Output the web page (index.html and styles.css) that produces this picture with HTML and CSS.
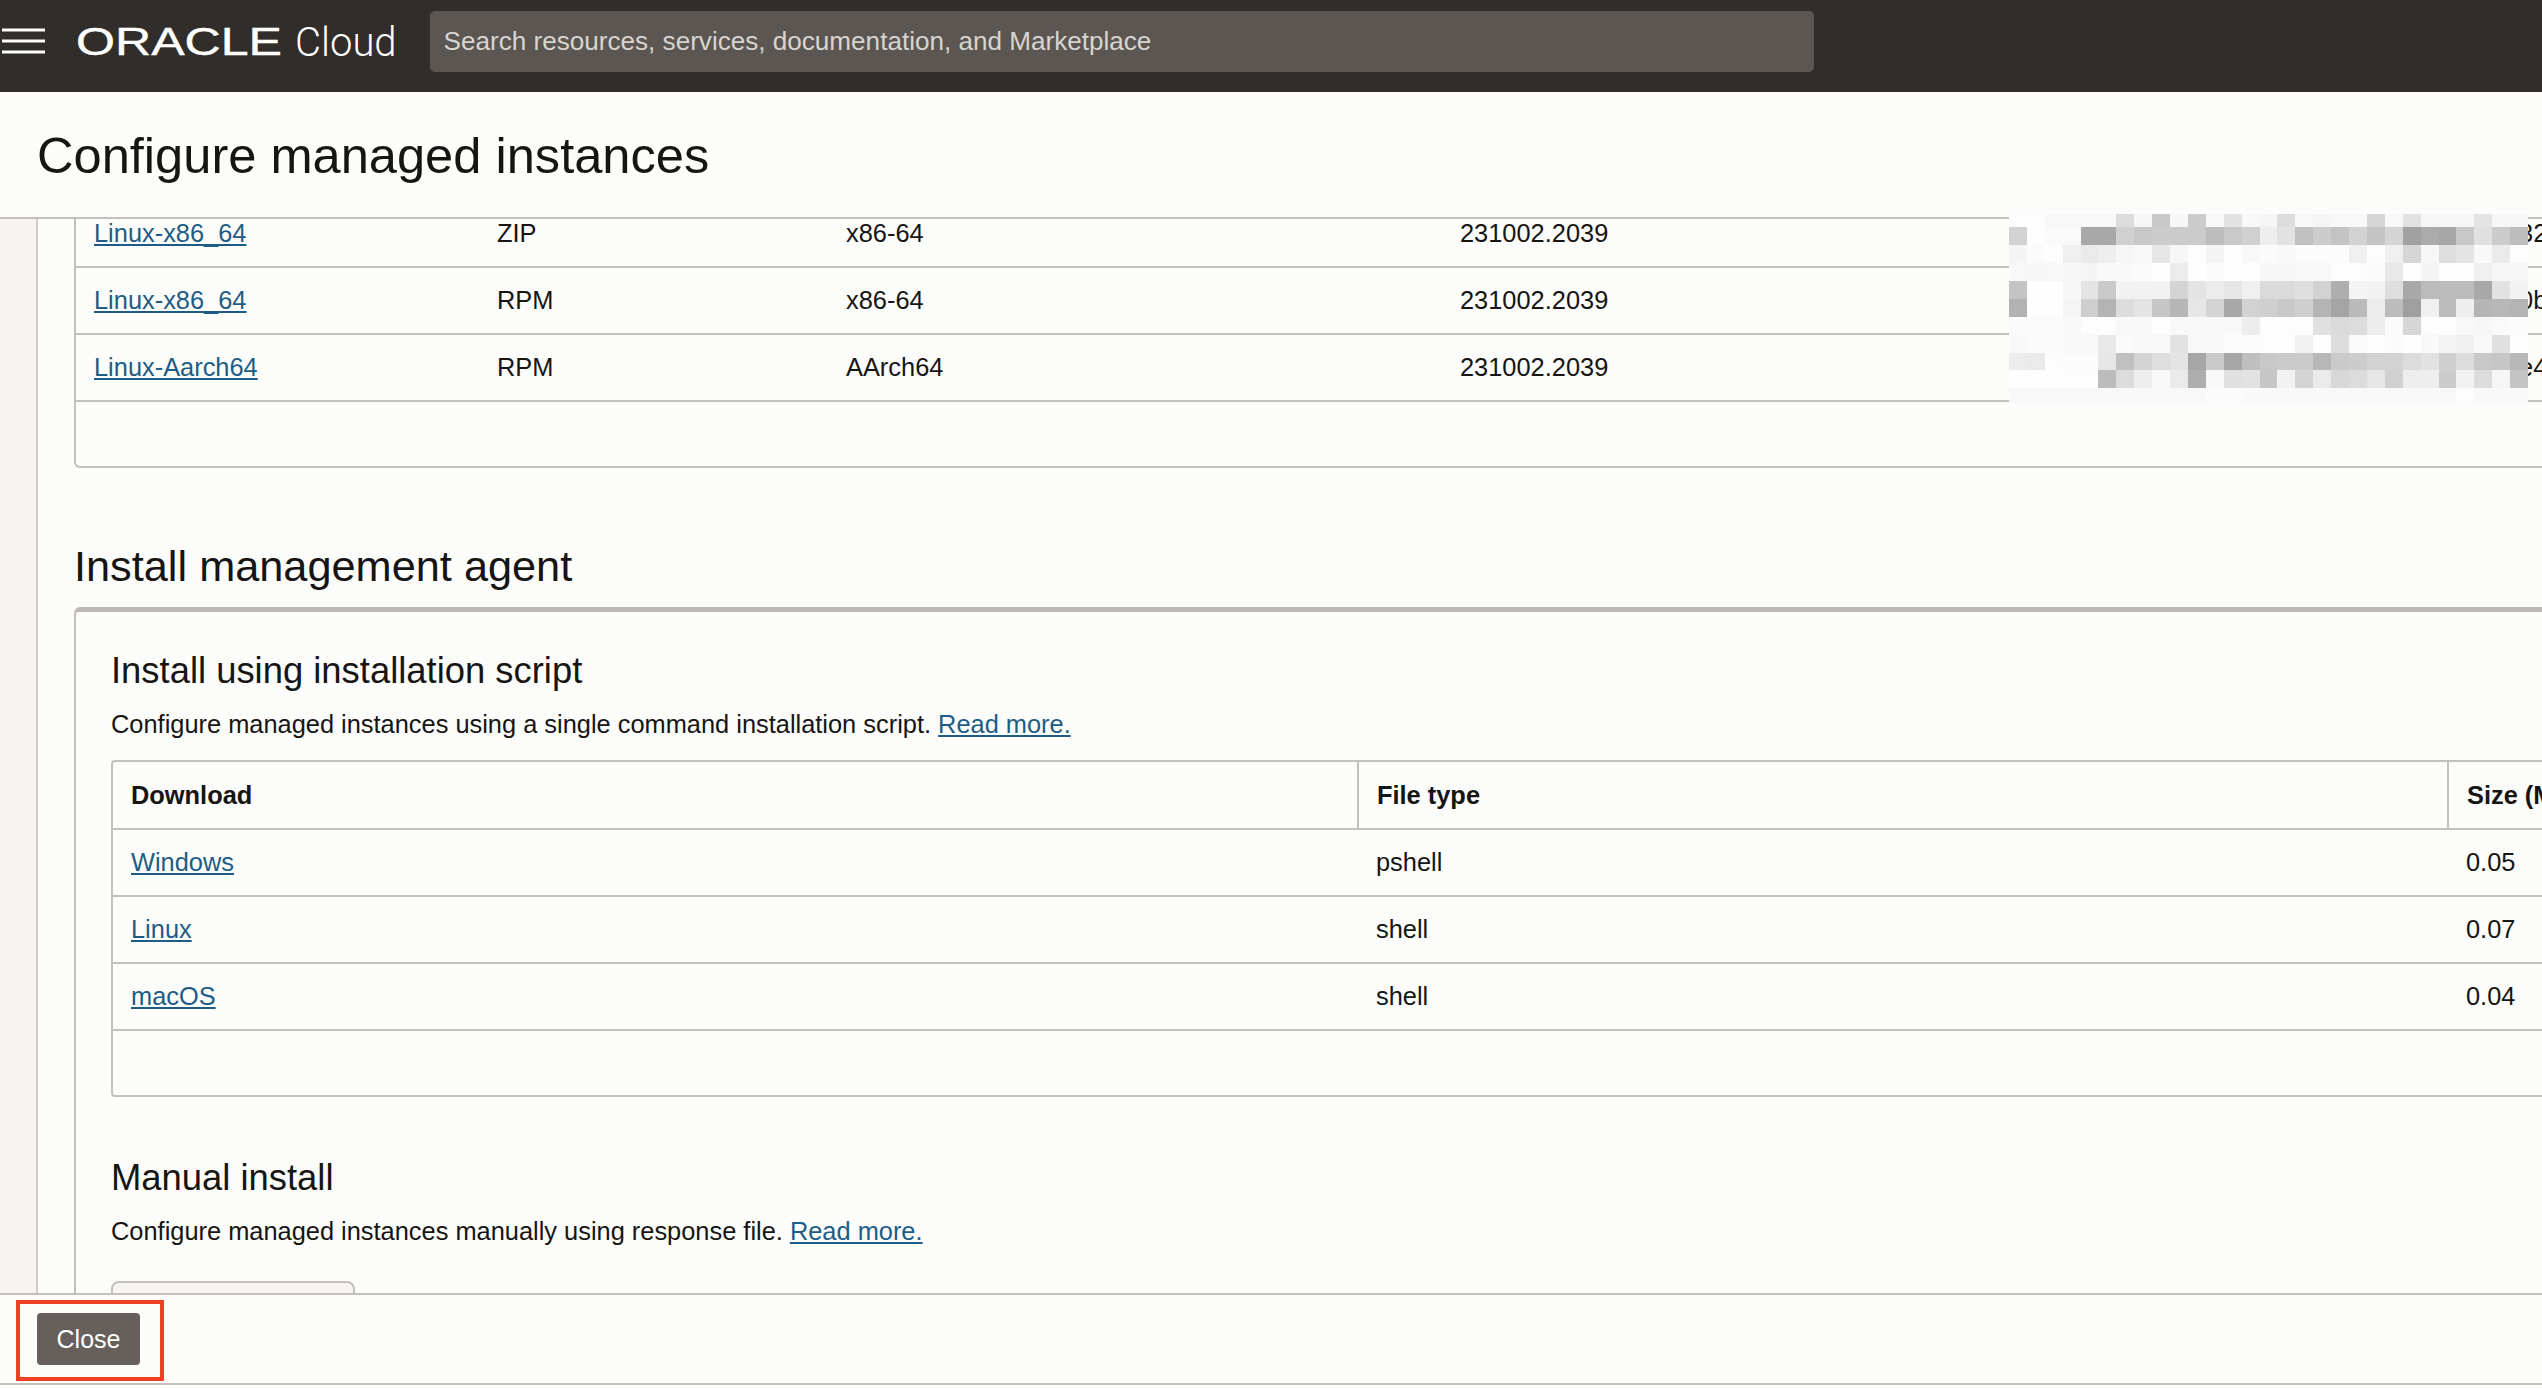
FILE: index.html
```html
<!DOCTYPE html>
<html lang="en">
<head>
  <meta charset="UTF-8" />
  <title>Configure managed instances</title>
  <link rel="stylesheet" href="styles.css">
</head>
<body>
  <header class="topbar">
    <button class="menu-button" aria-label="Menu">
      <svg width="43" height="26" viewBox="0 0 43 26"><path d="M0 2h43M0 13h43M0 24h43" stroke="#fff" stroke-width="3" fill="none"/></svg>
    </button>
    <div class="logo">
      <svg class="logo-mark" width="206" height="32" viewBox="0 0 206 32"><text x="0" y="29" font-size="38" textLength="206" lengthAdjust="spacingAndGlyphs" fill="#fff" stroke="#fff" stroke-width=".4">ORACLE</text></svg>
      <span class="logo-cloud">Cloud</span>
    </div>
    <div class="search">Search resources, services, documentation, and Marketplace</div>
  </header>

  <div class="page-title">
    <h1>Configure managed instances</h1>
  </div>

  <main class="main">
    <div class="gutter"></div>
    <div class="content">
      <section class="panel-downloads">
        <table class="table table-plain">
          <colgroup><col class="c1"><col class="c2"><col class="c3"><col class="c4"><col class="c5"></colgroup>
          <tr><td><a href="#">Linux-x86_64</a></td><td>ZIP</td><td>x86-64</td><td>231002.2039</td><td>000000000000000000000000000000000032</td></tr>
          <tr><td><a href="#">Linux-x86_64</a></td><td>RPM</td><td>x86-64</td><td>231002.2039</td><td>00000000000000000000000000000000000b</td></tr>
          <tr><td><a href="#">Linux-Aarch64</a></td><td>RPM</td><td>AArch64</td><td>231002.2039</td><td>0000000000000000000000000000000000e4</td></tr>
        </table>
      </section>

      <h2 class="section-title">Install management agent</h2>
      <section class="panel">
        <h3>Install using installation script</h3>
        <p>Configure managed instances using a single command installation script. <a href="#">Read more.</a></p>
        <div class="table-box">
          <table class="table table-script">
            <colgroup><col class="s1"><col class="s2"><col class="s3"></colgroup>
            <tr><th>Download</th><th>File type</th><th>Size (MB)</th></tr>
            <tr><td><a href="#">Windows</a></td><td>pshell</td><td>0.05</td></tr>
            <tr><td><a href="#">Linux</a></td><td>shell</td><td>0.07</td></tr>
            <tr><td><a href="#">macOS</a></td><td>shell</td><td>0.04</td></tr>
          </table>
        </div>
        <h3 class="manual-title">Manual install</h3>
        <p>Configure managed instances manually using response file. <a href="#">Read more.</a></p>
        <div class="clipped-button"></div>
      </section>
    </div>
  </main>

  <footer class="footer">
    <div class="callout">
      <button class="close-button">Close</button>
    </div>
  </footer>

  <div class="mosaic" id="mosaic"></div>
  <script src="script.js"></script>
</body>
</html>
```

FILE: styles.css
```css
*{box-sizing:border-box;}
html,body{height:100%;}
body{
  margin:0;height:100vh;overflow:hidden;display:flex;flex-direction:column;
  font-family:"Liberation Sans",Arial,sans-serif;font-size:25.4px;color:#161513;
  background:#fcfcfa;position:relative;
}
a{color:#1f5c85;text-decoration:underline;}

/* top bar */
.topbar{
  flex:none;height:92px;background:#312d2a;display:flex;align-items:flex-start;
}
.menu-button{
  background:none;border:none;padding:0;margin:28px 0 0 2px;width:43px;height:26px;display:block;
}
.menu-button svg{display:block;}
.logo{display:flex;align-items:flex-start;margin:26px 0 0 31px;color:#fff;}
.logo-mark{display:block;font-family:"Liberation Sans",Arial,sans-serif;overflow:visible;}
.logo-cloud{font-family:Roboto,"Liberation Sans",sans-serif;font-weight:300;font-size:40px;line-height:34px;margin-left:13px;}
.search{
  width:1384px;height:61px;margin:11px 0 0 33px;padding:0 14px;background:#5b5652;border-radius:5px;
  color:#d8d4cf;font-size:26.1px;line-height:61px;white-space:nowrap;
}

/* title */
.page-title{
  flex:none;height:127px;background:#fcfcfa;border-bottom:2px solid #c4c1bd;padding:3px 0 0 37px;
  position:relative;z-index:1;display:flex;align-items:center;
}
h1{margin:0;font-size:50.6px;font-weight:400;line-height:1;}

/* scrolled part */
.main{flex:1;min-height:0;display:flex;overflow:hidden;}
.gutter{flex:none;width:38px;background:#f5f4f2;border-right:2px solid #cfccc8;}
.content{flex:1;min-width:0;padding-left:36px;overflow:hidden;}

.panel-downloads{
  width:2600px;height:268px;margin-top:-19px;border:2px solid #c4c1bd;border-top:none;border-radius:0 0 0 6px;
}
.table{border-collapse:collapse;table-layout:fixed;}
.table td,.table th{
  height:67px;padding:0 0 0 18px;border-bottom:2px solid #c4c1bd;text-align:left;white-space:nowrap;overflow:hidden;
}
.table-plain{width:2598px;}
.c1{width:403px;}
.c2{width:349px;}
.c3{width:614px;}
.c4{width:579px;}
.c5{width:653px;}

.section-title{margin:66px 0 0;font-size:43.3px;font-weight:400;line-height:64px;}
.panel{
  width:2600px;margin-top:9px;padding:36px 35px 0;border-left:2px solid #c4c1bd;border-top:5px solid #bdb8b3;border-radius:6px 0 0 0;
}
h3{margin:0;font-size:36.4px;font-weight:400;line-height:46px;}
.panel p{margin:12px 0 0;line-height:36px;}
.table-box{
  width:2560px;height:337px;margin-top:18px;border:2px solid #c4c1bd;border-radius:4px 0 0 4px;
}
.table-script{width:2558px;}
.table-script th{font-weight:700;}
.table-script th + th{border-left:2px solid #c4c1bd;}
.s1{width:1245px;}
.s2{width:1090px;}
.s3{width:223px;}
.manual-title{margin-top:58px;}
.clipped-button{
  width:244px;height:60px;margin-top:32px;background:#f6f5f3;border:2px solid #c4c1bd;border-radius:8px;
}

/* bottom bar */
.footer{
  flex:none;height:92px;border-top:2px solid #c4c1bd;border-bottom:2px solid #c4c1bd;margin-bottom:3px;background:#fcfcfa;
  position:relative;z-index:1;padding:5px 0 0 16px;
}
.callout{
  width:148px;height:81px;border:4px solid #ee4124;padding:9px 0 0 17px;
}
.close-button{
  display:block;width:103px;height:52px;background:#665f5b;color:#fff;border:none;border-radius:4px;
  font-family:inherit;font-size:25px;padding:0;
}

/* blurred out checksums, lies over the table and the title line */
.mosaic{
  position:absolute;left:2009px;top:214px;width:519px;height:189px;z-index:2;display:grid;
  grid-template-columns:repeat(29,1fr);grid-template-rows:13px repeat(7,18px) 17px 18px 15px;background:#fdfdfb;
}
```

FILE: script.js
```js
// grey level per cell of the mosaic
const rows = [
  'fd fd f8 f8 f8 f8 dc f7 c8 f7 cc f8 e2 f8 f5 dc f8 f5 f8 f8 d6 f8 e2 f6 f6 f6 e4 f6 f6',
  'd2 fd fa fa a9 a8 d0 c8 cc cb cb bd c9 d0 ee e2 c0 cc c3 d2 c4 d4 a1 ab a6 c8 e0 cc bd',
  'f4 fb fd ef ea ee f6 f8 e6 f7 fd f4 fd f8 fb f9 fc fc fc f0 fd ef d6 f7 de e4 f9 ea fd',
  'f8 f7 f8 f7 f4 f9 f9 fb fe ec fe fa fd fd f7 f6 f8 f8 fd fd fb e8 fe f4 fe fe ef f7 f6',
  'c4 fe fe f7 e4 ca f2 f2 f2 d4 e4 ec e5 f0 da da df d2 ae f4 f2 de a8 bb bb bb a8 e2 f2',
  'b2 fe fe f5 ce b4 dd e4 c6 b6 e6 d4 a8 d2 cf c8 cf b4 a4 ba ec bc 9f f0 bc ee b5 b8 b4',
  'fb fb fb f9 fd fd f8 f8 fd f9 f8 f8 f8 ed fd fd fd e0 da dc ed fa d6 fd fd f8 f6 fa fc',
  'f8 fb fa f8 f8 e9 fa f8 f8 e2 f8 f8 fc fc fd fd f2 fe dc fa fd fb fe f9 f3 f0 f8 e0 fd',
  'ec ea fd fc fc e6 c0 d4 de e4 a6 ca a6 bf c8 cb cc b8 ca cc d2 d2 dc e2 cf dc c8 c6 b8',
  'fe fe fd fd fd bc dc ee f8 ea ae f8 e0 e2 c6 f2 d4 ea d8 dc e6 d0 ee ee cc f2 dc f6 c4',
  'f8 f8 f8 f8 f8 f8 f8 f8 f8 f8 f8 fb fb f9 f9 f8 f8 f8 f8 f8 f8 f8 f8 f8 f8 fd f8 f8 f8'
];

const mosaic = document.getElementById('mosaic');
rows.forEach(row => {
  row.split(' ').forEach(g => {
    const cell = document.createElement('div');
    cell.style.background = `#${g}${g}${g}`;
    mosaic.appendChild(cell);
  });
});
```
